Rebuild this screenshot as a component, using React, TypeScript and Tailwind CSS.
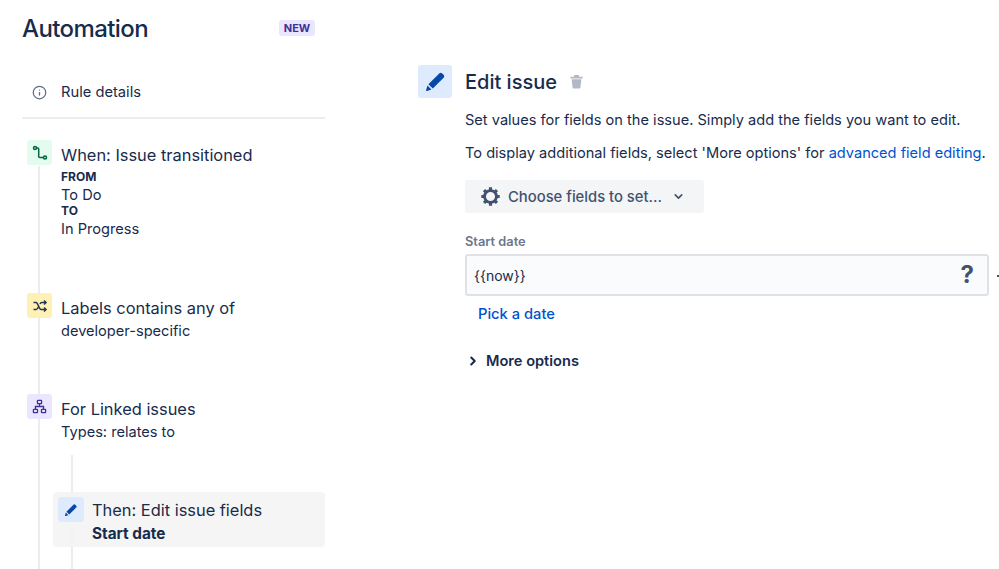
import { ChevronDown, ChevronRight, Info } from 'lucide-react'

const FONT = "font-['Inter','Liberation_Sans',sans-serif]"

function Pencil({ className }: { className: string }) {
  return (
    <svg viewBox="0 0 24 24" className={className} fill="currentColor">
      <path d="M15.6 4.2a2 2 0 0 1 2.8 0l1.4 1.4a2 2 0 0 1 0 2.8L9.4 18.8 5.2 14.6 15.6 4.2z" />
      <path d="M4.3 15.9l3.8 3.8-4.2 1.3a.7.7 0 0 1-.9-.9l1.3-4.2z" />
    </svg>
  )
}

function Gear() {
  return (
    <svg viewBox="0 0 24 24" className="w-[21px] h-[21px] text-[#42526e]" fill="none" stroke="currentColor">
      <circle cx="12" cy="12" r="6.8" strokeWidth="3.2" />
      <g strokeWidth="3.6">
        <path d="M12 1.5v4M12 18.500v4M1.500 12h4M18.500 12h4M4.600 4.600l2.800 2.800M16.600 16.600l2.800 2.800M4.600 19.400l2.800-2.800M16.600 7.400l2.800-2.800" />
      </g>
    </svg>
  )
}

function Trash() {
  return (
    <svg viewBox="0 0 16 16" className="w-[15px] h-[15px] text-[#b3b9c4]" fill="currentColor">
      <path d="M1.500 3h13v1.800h-13zM5.500 1h5v2h-5z" />
      <path d="M2.800 5.500h10.400l-1 9a1 1 0 0 1-1 .9H4.800a1 1 0 0 1-1-.9z" />
    </svg>
  )
}

function Transition() {
  return (
    <svg viewBox="0 0 16 16" className="w-[16px] h-[16px] text-[#006644]" fill="none" stroke="currentColor" strokeWidth="1.500">
      <circle cx="3" cy="3" r="1.500" />
      <circle cx="13" cy="12.500" r="1.500" />
      <path d="M4.500 3h1.200a1 1 0 0 1 1 1v7.500a1 1 0 0 0 1 1h3.800" />
    </svg>
  )
}

function Shuffle() {
  return (
    <svg viewBox="0 0 16 16" className="w-[16px] h-[16px] text-[#253858]" fill="none" stroke="currentColor" strokeWidth="1.600">
      <path d="M1.500 4.500h2.700c1.800 0 2.700 7 4.800 7h4.500" />
      <path d="M1.500 11.500h2.700c1 0 1.600-1.200 2.200-2.500M8 6c.4-.8.900-1.500 1.600-1.500h3.900" />
      <path d="M12 2.500l2 2-2 2M12 9.500l2 2-2 2" />
    </svg>
  )
}

function Tree() {
  return (
    <svg viewBox="0 0 16 16" className="w-[15px] h-[15px] text-[#403294]" fill="none" stroke="currentColor" strokeWidth="1.400">
      <rect x="5.800" y="1.500" width="4.400" height="3.500" rx=".6" />
      <rect x="1.500" y="11" width="4.400" height="3.500" rx=".6" />
      <rect x="10.100" y="11" width="4.400" height="3.500" rx=".6" />
      <path d="M8 5v3M3.700 11V8h8.600v3" />
    </svg>
  )
}

export default function App() {
  return (
    <div className={`${FONT} w-[999px] h-[569px] overflow-hidden bg-white flex text-[#172b4d]`}>
      <div className="w-[303px] ml-[22px] shrink-0 relative">
        <div className="h-[37px] mt-[10px] flex items-center justify-between pr-[10px]">
          <h1 className="text-[24px] leading-[37px] font-medium tracking-[-0.6px] text-[#172b4d]">Automation</h1>
          <span className="h-[16px] w-[36px] mb-[2px] rounded-[3px] bg-[#eae6ff] text-[#403294] text-[11px] leading-[16px] font-bold text-center">NEW</span>
        </div>

        <div className="mt-[33px] h-[39px] pb-[13px] border-b-2 border-[#ebecf0] flex items-center">
          <div className="w-[39px] pl-[10px] shrink-0">
            <Info className="w-[15px] h-[15px] text-[#5e6c84]" strokeWidth={2} />
          </div>
          <span className="text-[14.7px] leading-[20px]">Rule details</span>
        </div>

        {/* timeline lines */}
        <div className="absolute left-[16px] top-[166px] bottom-0 w-[2px] bg-[#ebecf0]" />
        <div className="absolute left-[49px] top-[455px] bottom-0 w-[2px] bg-[#ebecf0]" />

        <div className="relative mt-[21px] pl-[5px] h-[153px] flex gap-[9px]">
          <div className="w-[25px] h-[25px] rounded-[3px] bg-[#e3fcef] flex items-center justify-center">
            <Transition />
          </div>
          <div>
            <div className="text-[16.4px] leading-[30px]">When: Issue transitioned</div>
            <div className="text-[12px] leading-[15px] font-bold -mt-[1px]">FROM</div>
            <div className="text-[14.6px] leading-[20px] mt-[1px]">To Do</div>
            <div className="text-[12px] leading-[15px] font-bold -mt-[2px]">TO</div>
            <div className="text-[14.6px] leading-[20px] mt-[1px]">In Progress</div>
          </div>
        </div>

        <div className="relative pl-[5px] h-[101px] flex gap-[9px]">
          <div className="w-[25px] h-[25px] rounded-[3px] bg-[#fff0b3] flex items-center justify-center">
            <Shuffle />
          </div>
          <div>
            <div className="text-[16.4px] leading-[30px]">Labels contains any of</div>
            <div className="text-[14.6px] leading-[20px] -mt-[2px]">developer-specific</div>
          </div>
        </div>

        <div className="relative pl-[5px] h-[98px] flex gap-[9px]">
          <div className="w-[25px] h-[25px] rounded-[3px] bg-[#eae6ff] flex items-center justify-center">
            <Tree />
          </div>
          <div>
            <div className="text-[16.4px] leading-[30px]">For Linked issues</div>
            <div className="text-[14.6px] leading-[20px] -mt-[2px]">Types: relates to</div>
          </div>
        </div>

        <div className="relative ml-[31px] h-[55px] rounded-[4px] bg-[#f4f4f4]/90 pt-[5px] pl-[5px] flex gap-[8px]">
          <div className="w-[26px] h-[25px] rounded-[3px] bg-[#deebff] flex items-center justify-center">
            <Pencil className="w-[16px] h-[16px] text-[#0747a6]" />
          </div>
          <div>
            <div className="text-[16.4px] leading-[27px]">Then: Edit issue fields</div>
            <div className="text-[15.300px] leading-[19px] font-bold">Start date</div>
          </div>
        </div>
      </div>

      <div className="ml-[93px] flex-1 relative pt-[65px]">
        <div className="flex items-start">
          <div className="w-[34px] h-[33px] rounded-[3px] bg-[#deebff] flex items-center justify-center">
            <Pencil className="w-[25px] h-[25px] text-[#0747a6]" />
          </div>
          <h2 className="ml-[13px] text-[20px] leading-[35px] font-medium">Edit issue</h2>
          <div className="ml-[12px] mt-[9px]"><Trash /></div>
        </div>

        <div className="ml-[47px]">
          <p className="mt-[10px] text-[14.6px] leading-[20px] whitespace-nowrap">Set values for fields on the issue. Simply add the fields you want to edit.</p>
          <p className="mt-[13px] text-[14.6px] leading-[20px] whitespace-nowrap">
            To display additional fields, select 'More options' for <span className="text-[#0052cc]">advanced field editing</span>.
          </p>

          <button className="mt-[17px] w-[239px] h-[33px] rounded-[3px] bg-[#f4f5f7] flex items-center pl-[15px] text-[#42526e] text-[14.8px] font-medium">
            <Gear />
            <span className="ml-[7px] mt-[1px]">Choose fields to set...</span>
            <ChevronDown className="ml-[10px] w-[13px] h-[13px]" strokeWidth={3} />
          </button>

          <div className="mt-[21px] text-[12.8px] leading-[16px] font-semibold text-[#6b778c]">Start date</div>
          <div className="mt-[4px] w-[524px] h-[42px] rounded-[3px] border-2 border-[#dfe1e6] bg-[#fafbfc] flex items-center justify-between pl-[7px] pr-[13px]">
            <span className="text-[14px]">{'{{now}}'}</span>
            <span className="text-[24px] font-bold text-[#42526e]">?</span>
          </div>
          <div className="mt-[8px] ml-[13px] text-[14.7px] leading-[20px] font-medium text-[#0052cc]">Pick a date</div>
          <div className="mt-[27px] ml-[1px] flex items-center text-[14.6px] leading-[20px] font-semibold">
            <ChevronRight className="w-[14px] h-[14px]" strokeWidth={3.5} />
            <span className="ml-[6px]">More options</span>
          </div>
        </div>

        <div className="absolute left-[579px] top-[275px] w-[2px] h-[2px] bg-[#42526e]" />
      </div>
    </div>
  )
}
